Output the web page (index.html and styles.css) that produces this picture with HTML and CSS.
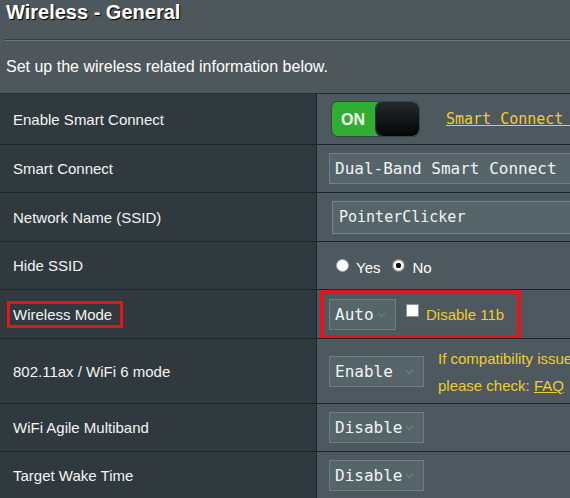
FILE: index.html
```html
<!DOCTYPE html>
<html>
<head>
<meta charset="utf-8">
<link rel="stylesheet" href="styles.css">
</head>
<body>
<div class="page">
  <h1 class="title">Wireless - General</h1>
  <div class="rule"></div>
  <p class="intro">Set up the wireless related information below.</p>
  <div class="table">
    <div class="row row-51">
      <div class="label">Enable Smart Connect</div>
      <div class="value">
        <div class="switch"><span class="switch-on">ON</span><span class="switch-knob"></span></div>
        <a class="rule-link">Smart Connect Rule</a>
      </div>
    </div>
    <div class="row">
      <div class="label">Smart Connect</div>
      <div class="value">
        <div class="select select-wide"><span>Dual-Band Smart Connect</span></div>
      </div>
    </div>
    <div class="row row-49">
      <div class="label">Network Name (SSID)</div>
      <div class="value">
        <div class="textbox">PointerClicker</div>
      </div>
    </div>
    <div class="row">
      <div class="label">Hide SSID</div>
      <div class="value">
        <div class="radios">
          <span class="radio"></span><span class="radio-text">Yes</span>
          <span class="radio radio-checked"></span><span class="radio-text">No</span>
        </div>
      </div>
    </div>
    <div class="row row-49">
      <div class="label"><span class="mark">Wireless Mode</span></div>
      <div class="value">
        <div class="mark-box">
          <div class="select select-auto"><span>Auto</span><svg class="caret" width="9" height="6" viewBox="0 0 9 6"><polyline points="1,1 4.5,4.5 8,1" fill="none" stroke="#6c7b81" stroke-width="1.2"/></svg></div>
          <span class="checkbox"></span>
          <span class="hint">Disable 11b</span>
        </div>
      </div>
    </div>
    <div class="row row-65">
      <div class="label">802.11ax / WiFi 6 mode</div>
      <div class="value">
        <div class="select select-mid"><span>Enable</span><svg class="caret" width="9" height="6" viewBox="0 0 9 6"><polyline points="1,1 4.5,4.5 8,1" fill="none" stroke="#6c7b81" stroke-width="1.2"/></svg></div>
        <div class="hint hint-block">If compatibility issue<br>please check: <a class="faq">FAQ</a></div>
      </div>
    </div>
    <div class="row">
      <div class="label">WiFi Agile Multiband</div>
      <div class="value">
        <div class="select select-mid"><span>Disable</span><svg class="caret" width="9" height="6" viewBox="0 0 9 6"><polyline points="1,1 4.5,4.5 8,1" fill="none" stroke="#6c7b81" stroke-width="1.2"/></svg></div>
      </div>
    </div>
    <div class="row">
      <div class="label">Target Wake Time</div>
      <div class="value">
        <div class="select select-mid"><span>Disable</span><svg class="caret" width="9" height="6" viewBox="0 0 9 6"><polyline points="1,1 4.5,4.5 8,1" fill="none" stroke="#6c7b81" stroke-width="1.2"/></svg></div>
      </div>
    </div>
  </div>
</div>
</body>
</html>
```
FILE: styles.css
```css
html, body {
  margin: 0;
  padding: 0;
  background: #4e575b;
  overflow: hidden;
}
.page {
  width: 570px;
  height: 498px;
  overflow: hidden;
  font-family: "Liberation Sans", Arial, sans-serif;
  color: #ffffff;
}
.title {
  margin: 0;
  padding-left: 6px;
  font-size: 20px;
  line-height: 24px;
  font-weight: bold;
  text-shadow: 1px 1px 1px #000;
  height: 39px;
}
.rule {
  margin-left: 5px;
  height: 0;
  border-top: 1px solid #353d41;
  border-bottom: 1px solid #6b7478;
}
.intro {
  margin: 16px 0 0 6px;
  font-size: 16px;
  line-height: 20px;
  height: 36px;
}
.table {
  border-top: 1px solid #262d31;
  width: 570px;
}
.row {
  display: grid;
  grid-template-columns: 317px 1fr;
  height: 48px;
  box-sizing: border-box;
  border-bottom: 1px solid #20272a;
}
.row-51 { height: 51px; }
.row-49 { height: 49px; }
.row-65 { height: 65px; }
.label {
  background: #30393e;
  border-right: 1px solid #20272a;
  display: flex;
  align-items: center;
  padding-left: 13px;
  font-size: 15px;
  color: #f4f4f4;
  white-space: nowrap;
}
.value {
  background: #4d595e;
  display: flex;
  align-items: center;
  padding-left: 12px;
  overflow: hidden;
  white-space: nowrap;
}
.value > * { flex-shrink: 0; }
.mark-box > * { flex-shrink: 0; }
.switch {
  display: flex;
  margin-left: 2px;
  width: 89px;
  height: 36px;
  box-sizing: border-box;
  border: 1px solid #3a4347;
  border-radius: 7px;
  background: #31ad32;
  overflow: hidden;
}
.switch-on {
  flex: 1;
  display: flex;
  align-items: center;
  justify-content: center;
  padding-right: 2px;
  padding-top: 2px;
  font-weight: bold;
  font-size: 16px;
  color: #f2fff0;
}
.switch-knob {
  width: 43px;
  flex-shrink: 0;
  border-radius: 7px;
  background: linear-gradient(#22292c, #040607);
  box-shadow: 0 0 0 1px #2c3437;
}
.rule-link {
  margin-left: 26px;
  font-family: "DejaVu Sans Mono", monospace;
  font-size: 15px;
  color: #f1cc2e;
  text-decoration: underline;
}
.select {
  display: flex;
  align-items: center;
  justify-content: space-between;
  box-sizing: border-box;
  height: 31px;
  padding: 0 9px 0 5px;
  background: #56656a;
  border: 1px solid #6e7e84;
  font-family: "DejaVu Sans Mono", monospace;
  font-size: 16px;
  color: #f2f4f4;
}
.select-wide { width: 300px; }
.select-auto { width: 67px; }
.select-mid { width: 95px; }
.caret { margin-top: 1px; }
.textbox {
  margin-left: 3px;
  box-sizing: border-box;
  width: 300px;
  height: 33px;
  padding-left: 6px;
  display: flex;
  align-items: center;
  background: #56656a;
  border: 1px solid #74858a;
  font-family: "DejaVu Sans Mono", monospace;
  font-size: 15px;
  color: #f2f4f4;
}
.radios {
  display: flex;
  align-items: center;
  margin-left: 7px;
  margin-top: 4px;
  font-size: 15px;
}
.radio {
  width: 13px;
  height: 13px;
  box-sizing: border-box;
  border-radius: 50%;
  background: #ffffff;
  border: 1px solid #9aa3a6;
  margin-top: -5px;
}
.radio-checked {
  background: radial-gradient(circle, #111 0 2.5px, #fff 3px 4px, #d8d8d8 4.5px);
  border-color: #7d868a;
}
.radio-text {
  margin-left: 7px;
  margin-right: 12px;
}
.mark {
  margin-left: -6px;
  padding: 2px 8px 2px 3px;
  border: 3px solid #e5141b;
  line-height: 17px;
}
.mark-box {
  align-self: stretch;
  margin: -1px 0 -1px -9px;
  width: 201px;
  box-sizing: border-box;
  border: 4px solid #e8121a;
  padding-left: 5px;
  display: flex;
  align-items: center;
}
.checkbox {
  width: 13px;
  height: 13px;
  box-sizing: border-box;
  background: #ffffff;
  border: 1px solid #8a9397;
  margin: -8px 0 0 10px;
}
.hint {
  font-size: 15px;
  color: #f1cc2e;
  margin-left: 7px;
}
.hint-block {
  margin-left: 14px;
  line-height: 27px;
  margin-top: 2px;
}
.faq {
  color: #f1cc2e;
  text-decoration: underline;
}
```
